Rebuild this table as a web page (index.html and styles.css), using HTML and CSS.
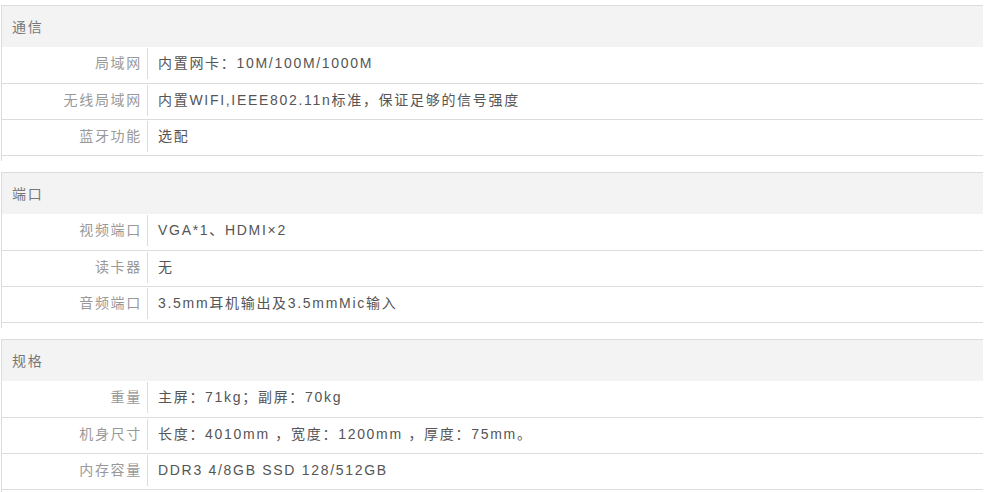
FILE: index.html
```html
<!DOCTYPE html>
<html lang="zh-CN">
<head>
<meta charset="utf-8">
<title>规格参数</title>
<link rel="stylesheet" href="styles.css">
</head>
<body>
<div class="spec">
  <section class="group">
    <h3 class="group-title">通信</h3>
    <dl class="row"><dt class="label">局域网</dt><dd class="value">内置网卡：10M/100M/1000M</dd></dl>
    <dl class="row"><dt class="label">无线局域网</dt><dd class="value">内置WIFI,IEEE802.11n标准，保证足够的信号强度</dd></dl>
    <dl class="row"><dt class="label">蓝牙功能</dt><dd class="value">选配</dd></dl>
  </section>
  <section class="group">
    <h3 class="group-title">端口</h3>
    <dl class="row"><dt class="label">视频端口</dt><dd class="value">VGA*1、HDMI×2</dd></dl>
    <dl class="row"><dt class="label">读卡器</dt><dd class="value">无</dd></dl>
    <dl class="row"><dt class="label">音频端口</dt><dd class="value">3.5mm耳机输出及3.5mmMic输入</dd></dl>
  </section>
  <section class="group">
    <h3 class="group-title">规格</h3>
    <dl class="row"><dt class="label">重量</dt><dd class="value">主屏：71kg；副屏：70kg</dd></dl>
    <dl class="row"><dt class="label">机身尺寸</dt><dd class="value">长度：4010mm ，宽度：1200mm ，厚度：75mm。</dd></dl>
    <dl class="row"><dt class="label">内存容量</dt><dd class="value">DDR3 4/8GB SSD 128/512GB</dd></dl>
  </section>
</div>
</body>
</html>
```

FILE: styles.css
```css
html, body {
  margin: 0;
  padding: 0;
  background: #fff;
}

body {
  font-family: "Liberation Sans", "Noto Sans CJK SC", sans-serif;
  font-size: 14px;
  letter-spacing: 1.7px;
}

.spec {
  width: 982px;
  margin: 5px 0 0 1px;
}

.group {
  border-top: 1px solid #dcdcdc;
  border-left: 1px solid #dcdcdc;
  padding-bottom: 5px;
  margin-bottom: 11px;
}

.group-title {
  margin: 0;
  height: 39px;
  padding: 2px 0 0 10px;
  line-height: 39px;
  background: #f3f3f3;
  font-size: 14px;
  font-weight: normal;
  color: #777;
}

.row {
  display: flex;
  margin: 0;
  height: 35px;
  border-bottom: 1px solid #dcdcdc;
}

.group-title + .row {
  height: 36px;
}

.label {
  width: 140px;
  padding-right: 5px;
  margin-top: 1px;
  height: 31px;
  line-height: 31px;
  text-align: right;
  color: #999;
  border-right: 1px solid #dcdcdc;
}

.value {
  margin: 1px 0 0 0;
  padding-left: 10px;
  height: 31px;
  line-height: 31px;
  color: #555;
  white-space: nowrap;
}
```
